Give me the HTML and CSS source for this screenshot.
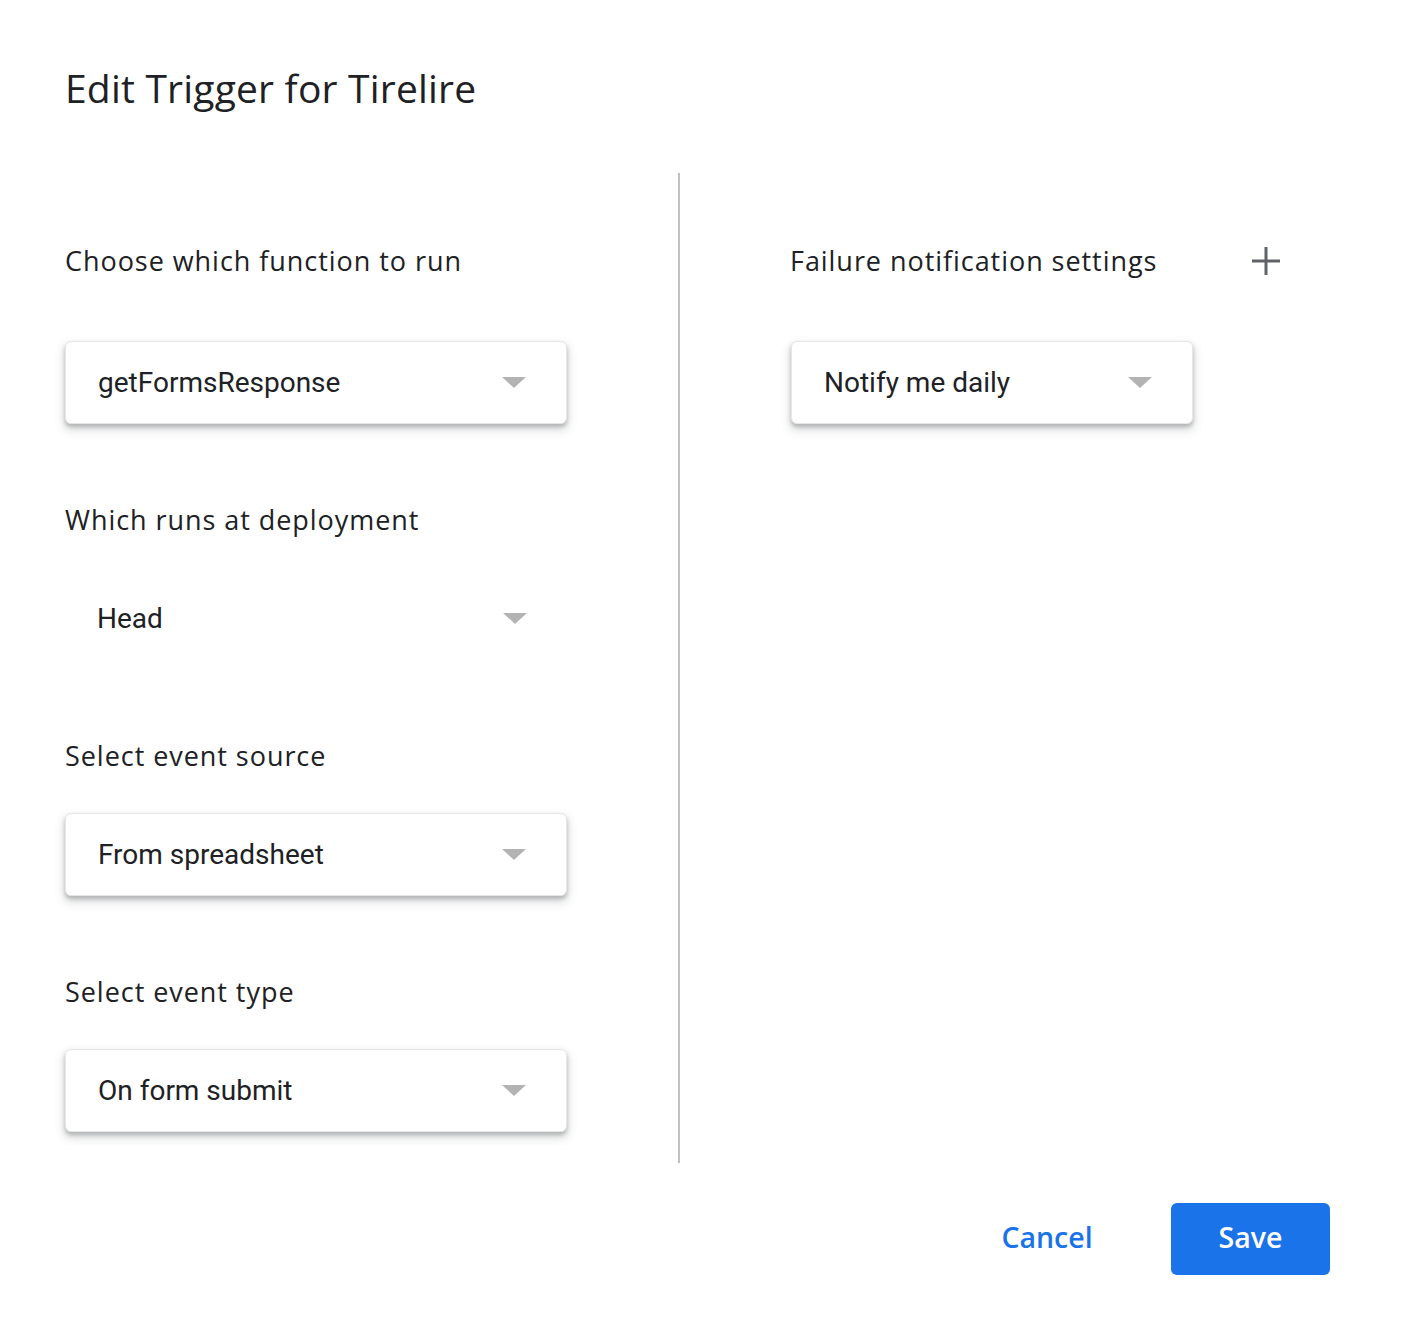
FILE: index.html
```html
<!DOCTYPE html>
<html lang="en">
<head>
<meta charset="utf-8">
<title>Edit Trigger for Tirelire</title>
<link rel="stylesheet" href="styles.css">
</head>
<body>
<div class="dialog">
  <h1 class="title">Edit Trigger for Tirelire</h1>
  <div class="columns">
    <div class="col-left">
      <section class="field first">
        <div class="label">Choose which function to run</div>
        <div class="select boxed"><span class="value">getFormsResponse</span><span class="arrow"></span></div>
      </section>
      <section class="field">
        <div class="label">Which runs at deployment</div>
        <div class="select"><span class="value">Head</span><span class="arrow"></span></div>
      </section>
      <section class="field">
        <div class="label">Select event source</div>
        <div class="select boxed"><span class="value">From spreadsheet</span><span class="arrow"></span></div>
      </section>
      <section class="field last">
        <div class="label">Select event type</div>
        <div class="select boxed"><span class="value">On form submit</span><span class="arrow"></span></div>
      </section>
    </div>
    <div class="divider"></div>
    <div class="col-right">
      <section class="field first">
        <div class="label-row">
          <div class="label">Failure notification settings</div>
          <svg class="plus" width="28" height="28" viewBox="0 0 28 28" aria-hidden="true"><path d="M12.5 0h3v12.5H28v3H15.5V28h-3V15.5H0v-3h12.5z" fill="#5f6368"/></svg>
        </div>
        <div class="select boxed narrow"><span class="value">Notify me daily</span><span class="arrow"></span></div>
      </section>
    </div>
  </div>
  <div class="footer">
    <button class="btn cancel">Cancel</button>
    <button class="btn save">Save</button>
  </div>
</div>
</body>
</html>
```
FILE: styles.css
```css
* { box-sizing: border-box; }
html, body { margin: 0; padding: 0; background: #fff; }
body {
  font-family: "Open Sans", "Noto Sans", sans-serif;
  color: #202124;
}
.dialog {
  width: 1403px;
  height: 1337px;
  padding: 60px 73px 0 65px;
}
.title {
  margin: 0;
  font-family: "Open Sans", sans-serif;
  font-weight: 400;
  font-size: 39px;
  line-height: 56px;
  letter-spacing: 0.2px;
  color: #202124;
}
.columns {
  display: grid;
  grid-template-columns: 613px 2px 1fr;
  grid-template-rows: 990px;
  margin-top: 57px;
  height: 990px;
}
.divider { background: #bdc1c6; }
.col-left { padding-top: 68px; }
.col-right { padding: 68px 0 0 110px; }
.field { margin-bottom: 76px; }
.field.last { margin-bottom: 0; }
.label {
  font-size: 27px;
  line-height: 40px;
  letter-spacing: 0.95px;
  color: #202124;
}
.field .label { margin-bottom: 37px; }
.field.first .label { margin-bottom: 60px; }
.label-row {
  display: flex;
  align-items: flex-start;
  width: 490px;
  justify-content: space-between;
}
.plus { margin-top: 6px; }
.select {
  display: flex;
  align-items: center;
  justify-content: space-between;
  width: 502px;
  height: 83px;
  padding: 0 40px 0 32px;
  border-radius: 6px;
  font-family: Roboto, "Liberation Sans", sans-serif;
  font-size: 28px;
  color: #202124;
}
.select.boxed {
  background: #fff;
  border: 1px solid #e6e6e6;
  box-shadow: 0 3px 4px rgba(60,64,67,.3), 0 5px 10px 2px rgba(60,64,67,.15);
}
.select.narrow { width: 402px; margin-left: 1px; }
.arrow {
  width: 0;
  height: 0;
  border-left: 12px solid transparent;
  border-right: 12px solid transparent;
  border-top: 11px solid #b3b3b3;
}
.footer {
  display: flex;
  justify-content: flex-end;
  align-items: center;
  gap: 45px;
  margin-top: 40px;
}
.btn {
  font-family: "Open Sans", sans-serif;
  font-size: 28.5px;
  font-weight: 600;
  line-height: 1;
  height: 72px;
  width: 158px;
  padding: 0 0 3px;
  border-radius: 6px;
  border: none;
  cursor: pointer;
}
.cancel { background: transparent; color: #1a73e8; }
.save { background: #1a73e8; color: #fff; width: 159px; }
```
